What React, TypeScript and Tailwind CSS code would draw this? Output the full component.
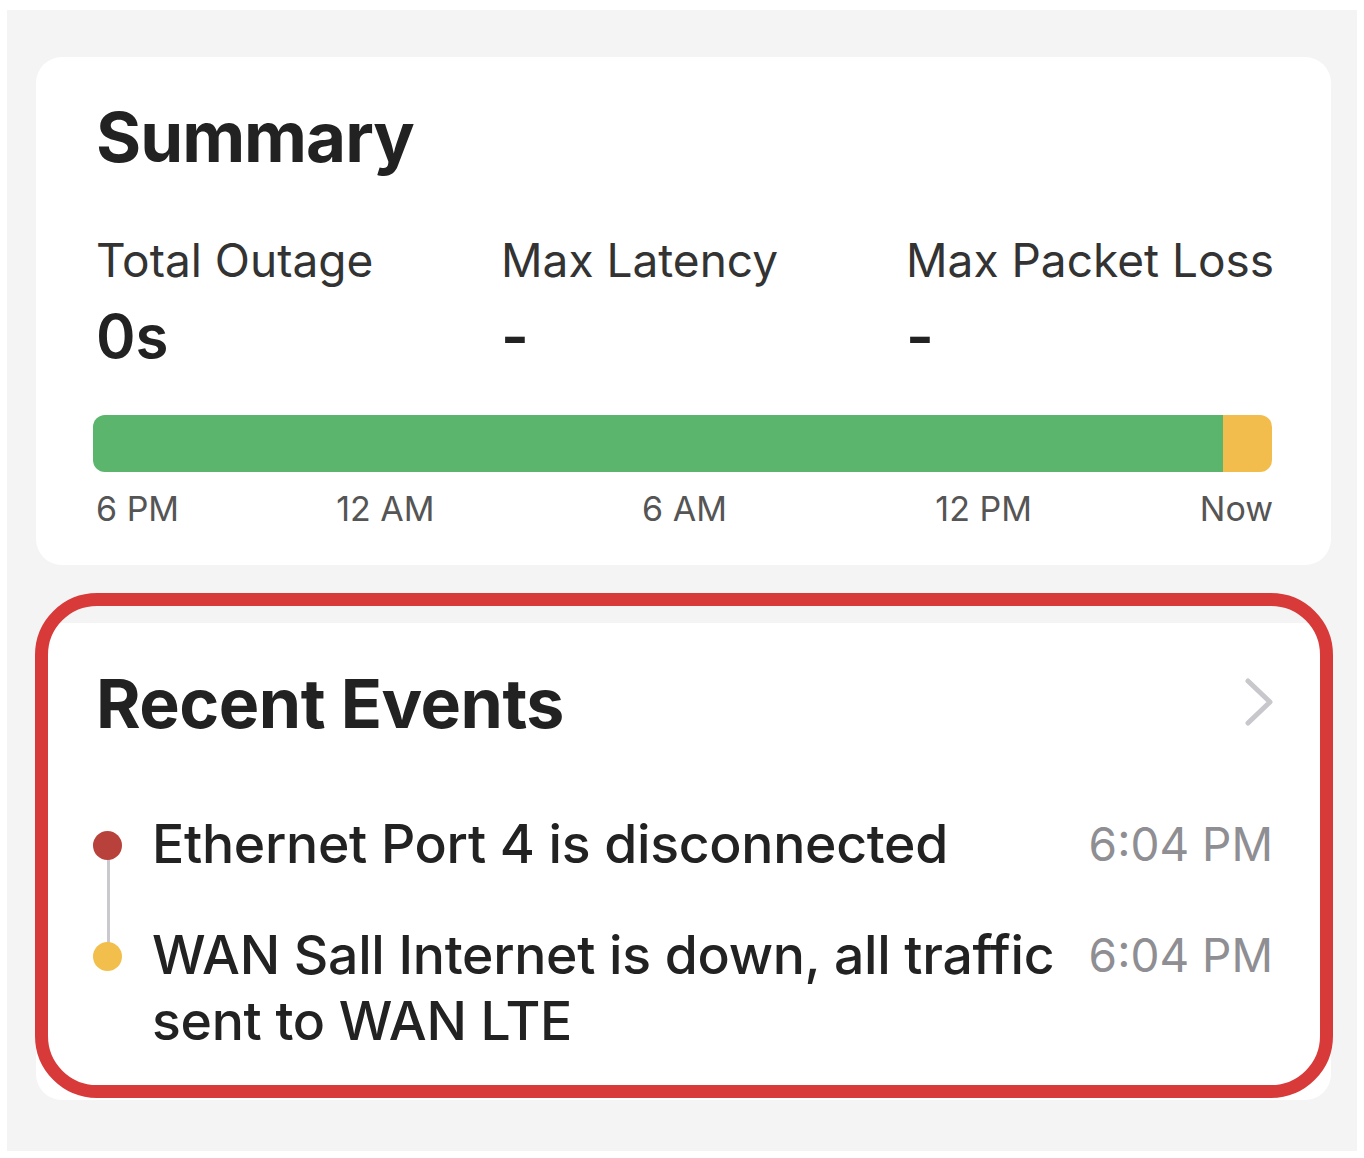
import React from 'react';

const FONT = "font-['Inter','Liberation_Sans',sans-serif]";

const metrics = [
  { label: 'Total Outage', value: '0s' },
  { label: 'Max Latency', value: '-' },
  { label: 'Max Packet Loss', value: '-' },
];

const events = [
  { text: 'Ethernet Port 4 is disconnected', time: '6:04 PM', dot: 'bg-[#b8413b]' },
  { text: 'WAN Sall Internet is down, all traffic sent to WAN LTE', time: '6:04 PM', dot: 'bg-[#f2bf4c]' },
];

const Summary = () => (
  <div className="bg-white rounded-[26px] h-[508px] pl-[60px] pr-[58px] pt-[40px]">
    <h1 className="text-[69px] leading-[80px] font-bold text-[#222] tracking-[-1px]">Summary</h1>
    <div className="grid grid-cols-[405px_405px_1fr] mt-[56px]">
      {metrics.map((m) => (
        <div key={m.label}>
          <div className="text-[46px] leading-[54px] text-[#333] whitespace-nowrap">{m.label}</div>
          <div className="text-[60px] leading-[72px] font-semibold text-[#222] mt-[13px]">{m.value}</div>
        </div>
      ))}
    </div>
    <div className="flex h-[57px] rounded-[12px] overflow-hidden mt-[43px] ml-[-3px] mr-[1px]">
      <div className="flex-1 bg-[#5bb56c]" />
      <div className="w-[49px] bg-[#f3bd4e]" />
    </div>
    <div className="relative h-[40px] mt-[17px] text-[34px] leading-[40px] text-[#555]">
      <span className="absolute left-0">6 PM</span>
      <span className="absolute left-1/4 -translate-x-[55%]">12 AM</span>
      <span className="absolute left-1/2 -translate-x-1/2">6 AM</span>
      <span className="absolute left-3/4 -translate-x-[45%]">12 PM</span>
      <span className="absolute right-0">Now</span>
    </div>
  </div>
);

const RecentEvents = () => (
  <div className="relative bg-white rounded-[26px] h-[477px] pl-[60px] pr-[58px] pt-[40px]">
    <div className="flex items-center justify-between">
      <h2 className="text-[68px] leading-[80px] font-bold text-[#222] tracking-[-0.5px]">Recent Events</h2>
      <svg width="32" height="50" viewBox="0 0 32 50" className="-mr-[2px] -mt-[2px]">
        <path d="M5 4 L27 25 L5 46" fill="none" stroke="#c7c7cc" strokeWidth="5" strokeLinecap="round" strokeLinejoin="round" />
      </svg>
    </div>
    <div className="relative mt-[68px]">
      <div className="absolute left-[11px] top-[34px] h-[110px] w-[3px] bg-[#c9c9ce]" />
      {events.map((e, i) => (
        <div key={i} className={`flex items-start ${i > 0 ? 'mt-[45px]' : ''}`}>
          <div className={`relative w-[29px] h-[29px] rounded-full ${e.dot} mt-[20px] -ml-[3px] shrink-0`} />
          <div className="flex-1 ml-[30px] text-[53.5px] leading-[66px] font-medium text-[#222] tracking-[-0.3px]">{e.text}</div>
          <div className="ml-[16px] text-[46px] leading-[66px] text-[#8e8e93] whitespace-nowrap">{e.time}</div>
        </div>
      ))}
    </div>
    <div className="absolute -left-[1px] -top-[30px] -right-[2px] bottom-[2px] border-[13px] border-[#d83a39] rounded-[62px] pointer-events-none" />
  </div>
);

export default function App() {
  return (
    <div className={`w-[1364px] h-[1158px] bg-white pt-[10px] pl-[7px] ${FONT}`}>
      <div className="w-[1350px] h-[1141px] bg-[#f4f4f4] pl-[29px] pr-[26px] pt-[47px]">
        <Summary />
        <div className="mt-[58px]">
          <RecentEvents />
        </div>
      </div>
    </div>
  );
}
